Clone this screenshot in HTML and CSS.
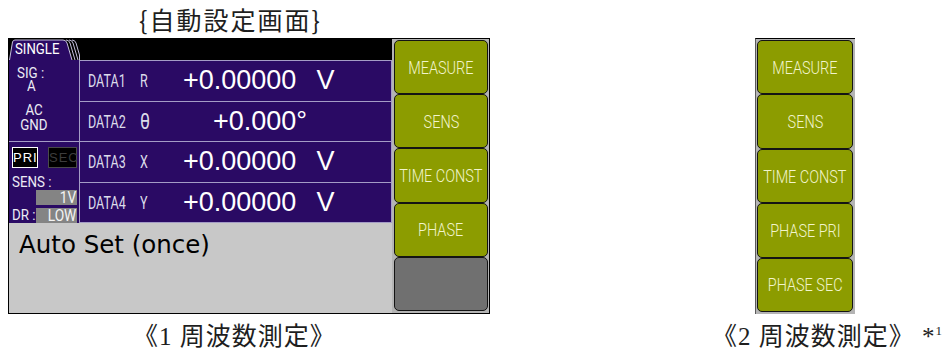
FILE: index.html
```html
<!DOCTYPE html>
<html lang="ja">
<head>
<meta charset="UTF-8">
<meta name="viewport" content="width=device-width, initial-scale=1.0">
<title>自動設定画面</title>
<link rel="stylesheet" href="styles.css">
</head>

<body>
  <div class="page">
    <div class="fig fig-one">
      <div class="heading">{自動設定画面}</div>

      <div class="screen">
        <div class="main">
          <div class="topbar">
            <div class="tab">
              <svg class="tab-shape" width="72" height="21" viewBox="0 0 72 21">
                <path d="M0.5 21 L3.5 3 Q4 1 6 1 L54 1 Q57 1 58 4 L63 21 Z" fill="#2a0a64"/>
                <path d="M0.5 21 L3.5 3 Q4 1 6 1 L54 1 Q57 1 58 4 L63 21" fill="none" stroke="#c4bedc" stroke-width="1"/>
                <path d="M57 1 Q60 1 61 4 L66 21" fill="none" stroke="#c4bedc" stroke-width="1"/>
                <path d="M60 1 Q63 1 64 4 L69 21" fill="none" stroke="#c4bedc" stroke-width="1"/>
                <path d="M63 1 Q66 1 67 4 L70.5 16 L70.5 21" fill="none" stroke="#c4bedc" stroke-width="1"/>
              </svg>
              <span class="tab-label">SINGLE</span>
            </div>
          </div>

          <div class="body">
            <div class="side">
              <div class="sig">
                <div class="st st-sig"><span class="nx">SIG :</span></div>
                <div class="st st-a"><span class="nx">A</span></div>
                <div class="st st-mid st-ac"><span class="nc">AC</span></div>
                <div class="st st-mid"><span class="nc">GND</span></div>
              </div>
              <div class="ref">
                <div class="mode">
                  <span class="mode-on">PRI</span>
                  <span class="mode-off">SEC</span>
                </div>
                <div class="st st-sens"><span class="nx">SENS :</span></div>
                <div class="field field-sens"><span class="nr">1V</span></div>
                <div class="dr">
                  <div class="st st-dr"><span class="nx">DR :</span></div>
                  <div class="field"><span class="nr">LOW</span></div>
                </div>
              </div>
            </div>

            <div class="data">
              <div class="row">
                <div class="lbl"><span class="nx">DATA1</span></div>
                <div class="sym"><span class="nx">R</span></div>
                <div class="val">+0.00000<span class="unit">V</span></div>
              </div>
              <div class="row">
                <div class="lbl"><span class="nx">DATA2</span></div>
                <div class="sym"><span class="nx theta">θ</span></div>
                <div class="val val-mid">+0.000°</div>
              </div>
              <div class="row">
                <div class="lbl"><span class="nx">DATA3</span></div>
                <div class="sym"><span class="nx">X</span></div>
                <div class="val">+0.00000<span class="unit">V</span></div>
              </div>
              <div class="row">
                <div class="lbl"><span class="nx">DATA4</span></div>
                <div class="sym"><span class="nx">Y</span></div>
                <div class="val">+0.00000<span class="unit">V</span></div>
              </div>
            </div>
          </div>

          <div class="msg">Auto Set (once)</div>
        </div>

        <div class="keys">
          <div class="key"><span>MEASURE</span></div>
          <div class="key"><span>SENS</span></div>
          <div class="key"><span>TIME CONST</span></div>
          <div class="key"><span>PHASE</span></div>
          <div class="key key-off"></div>
        </div>
      </div>

      <div class="caption">《1 周波数測定》</div>
    </div>

    <div class="fig fig-two">
      <div class="heading"></div>
      <div class="keys keys-solo">
        <div class="key"><span>MEASURE</span></div>
        <div class="key"><span>SENS</span></div>
        <div class="key"><span>TIME CONST</span></div>
        <div class="key"><span>PHASE PRI</span></div>
        <div class="key"><span>PHASE SEC</span></div>
      </div>
      <div class="caption caption-two">《2 周波数測定》 *<sup>1</sup></div>
    </div>
  </div>
</body>
</html>
```

FILE: styles.css
```css
* {
  box-sizing: border-box;
  margin: 0;
  padding: 0;
}

body {
  font-family: "Liberation Sans", Arial, sans-serif;
  background: #fff;
  width: 947px;
  height: 351px;
  overflow: hidden;
}

.page {
  display: flex;
}

/* narrow lcd-like lettering */
.nx, .nc, .nr {
  display: inline-block;
  transform: scaleX(0.86);
  transform-origin: left center;
  white-space: nowrap;
}

.nc {
  transform-origin: center;
}

.nr {
  transform-origin: right center;
}

.fig-one {
  width: 490px;
}

.heading {
  height: 38px;
  padding-left: 139px;
  font-family: "Noto Sans CJK JP", sans-serif;
  font-size: 25px;
  line-height: 38px;
  letter-spacing: 2px;
  color: #1e1e1e;
}

.screen {
  display: flex;
  margin-left: 8px;
  width: 482px;
  height: 276px;
  border: 1px solid #000;
}

.main {
  width: 383px;
  display: flex;
  flex-direction: column;
}

.topbar {
  height: 21px;
  background: #000;
}

.tab {
  position: relative;
  width: 72px;
  height: 21px;
}

.tab-shape {
  position: absolute;
  left: 0;
  top: 0;
}

.tab-label {
  position: relative;
  display: inline-block;
  margin-left: 6px;
  font-family: Roboto, sans-serif;
  font-size: 15px;
  line-height: 21px;
  color: #fff;
  transform: scaleX(0.88);
  transform-origin: left center;
}

.body {
  display: flex;
  height: 163px;
  background: #2a0a64;
}

.side {
  width: 71px;
  border-right: 1px solid #a49cc6;
}

.sig {
  height: 82px;
  padding-top: 7px;
  border-bottom: 1px solid #a49cc6;
}

.st {
  font-family: Roboto, sans-serif;
  font-size: 15.5px;
  line-height: 12.5px;
  color: #ececf4;
}

.st-sig {
  margin-left: 8px;
}

.st-a {
  margin-left: 18px;
}

.st-mid {
  width: 50px;
  text-align: center;
  line-height: 14.5px;
}

.st-ac {
  margin-top: 11px;
}

.ref {
  padding: 5px 0 0 3px;
}

.mode {
  display: flex;
  gap: 10px;
  height: 21px;
}

.mode-on, .mode-off {
  background: #000;
  font-size: 13px;
  line-height: 19px;
  letter-spacing: 1px;
  text-align: center;
}

.mode-on {
  width: 26px;
  border: 1px solid #fff;
  color: #fff;
}

.mode-off {
  width: 29px;
  border: 1px solid #4a4a4a;
  color: #3c3c3c;
}

.st-sens {
  margin-top: 8px;
}

.field {
  width: 41px;
  height: 15px;
  padding-right: 1px;
  background: #848484;
  color: #f4f4f4;
  font-family: Roboto, sans-serif;
  font-size: 16px;
  line-height: 15px;
  text-align: right;
}

.field-sens {
  margin: 1px 0 0 24px;
}

.dr {
  display: flex;
  align-items: center;
  margin-top: 3px;
}

.st-dr {
  width: 24px;
}

.data {
  flex: 1;
  display: flex;
  flex-direction: column;
  border-top: 1px solid #a49cc6;
  border-right: 1px solid #a49cc6;
}

.row {
  flex: 1;
  display: flex;
  align-items: center;
  padding-left: 8px;
  border-bottom: 1px solid #a49cc6;
  color: #dcdcea;
  font-family: Roboto, sans-serif;
  font-size: 19px;
}

.row .nx {
  transform: scaleX(0.66);
}

.row .theta {
  font-size: 22px;
  transform: scaleX(0.8);
}

.lbl {
  width: 52px;
}

.sym {
  width: 43px;
}

.val {
  font-family: "Liberation Sans", Arial, sans-serif;
  font-size: 27px;
  color: #fff;
  white-space: nowrap;
}

.unit {
  margin-left: 20px;
}

.val-mid {
  margin-left: 30px;
}

.msg {
  flex: 1;
  padding: 7px 0 0 10px;
  background: #c8c8c8;
  font-family: "DejaVu Sans", sans-serif;
  font-size: 24.5px;
  color: #000;
}

.keys {
  width: 97px;
  display: flex;
  flex-direction: column;
  padding: 1px 1px 2px 2px;
  background: #b4b4b4;
}

.key {
  flex: 1;
  display: flex;
  align-items: center;
  justify-content: center;
  background: #8c9c00;
  border: 1px solid #141414;
  border-radius: 5px;
  color: #f2f4cc;
  font-family: Roboto, sans-serif;
  font-weight: 300;
  font-size: 19px;
  white-space: nowrap;
}

.key span {
  display: inline-block;
  transform: scaleX(0.76);
}

.key-off {
  background: #707070;
}

.caption {
  padding: 8px 0 0 133px;
  font-family: "Liberation Serif", "Noto Sans CJK JP", serif;
  font-size: 25px;
  line-height: 30px;
  letter-spacing: 1px;
  color: #1e1e1e;
  white-space: nowrap;
}

.fig-two {
  margin-left: 222px;
  width: 235px;
}

.keys-solo {
  margin-left: 43px;
  width: 100px;
  height: 276px;
  border-top: 1px solid #000;
  border-left: 1px solid #5a5a5a;
  padding: 1px 2px 2px 1px;
}

.caption-two {
  padding-left: 0;
}

.caption sup {
  font-size: 13px;
  line-height: 0;
  vertical-align: 10px;
}
```
